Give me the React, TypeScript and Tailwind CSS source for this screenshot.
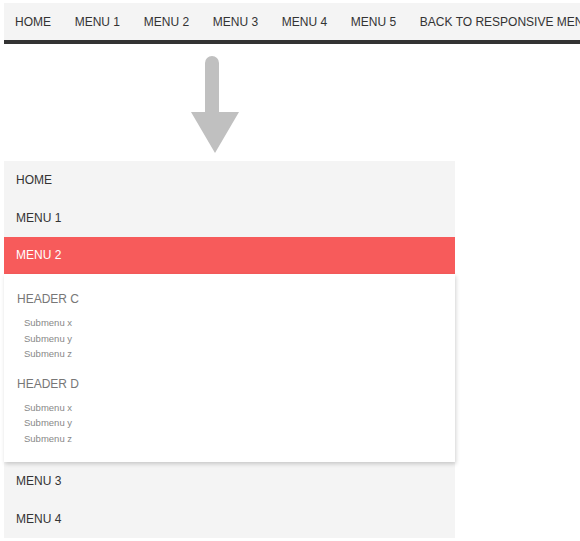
import React from "react";

const navItems = ["HOME", "MENU 1", "MENU 2", "MENU 3", "MENU 4", "MENU 5", "BACK TO RESPONSIVE MENU"];

function Section({ title }: { title: string }) {
  return (
    <div>
      <div className="h-[20px] leading-[20px] text-[12px] text-[#777777] pl-[13px]">{title}</div>
      <ul className="mt-[6px] pl-[20px] text-[9.5px] leading-[15.5px] text-[#888888]">
        <li>Submenu x</li>
        <li>Submenu y</li>
        <li>Submenu z</li>
      </ul>
    </div>
  );
}

export default function App() {
  return (
    <div className="w-[580px] h-[541px] overflow-hidden bg-white pl-[4px] pt-[3px]" style={{ fontFamily: '"Liberation Sans", Arial, sans-serif' }}>
      <nav className="bg-[#f4f4f4] border-b-[4px] border-[#333333] h-[41px] overflow-hidden">
        <ul className="flex whitespace-nowrap h-[37px] items-center text-[12px] text-[#333333]">
          {navItems.map((t) => (
            <li key={t} className="px-[11.85px] first:pl-[11px]">{t}</li>
          ))}
        </ul>
      </nav>
      <div className="h-[117px] flex justify-start">
        <svg width="48" height="98" viewBox="0 0 48 98" className="ml-[187px] mt-[12px]">
          <path d="M14 7 a7 7 0 0 1 14 0 V56 H48 L24 97 L0 56 H14 Z" fill="#c0c0c0" />
        </svg>
      </div>
      <div className="w-[451px] bg-[#f4f4f4] text-[12px] text-[#333333]">
        <div className="h-[38px] leading-[38px] pl-[12px]">HOME</div>
        <div className="h-[38px] leading-[38px] pl-[12px]">MENU 1</div>
        <div className="h-[37px] leading-[37px] pl-[12px] bg-[#f75b5b] text-white">MENU 2</div>
        <div className="relative z-10 bg-white shadow-[1px_2px_4px_rgba(0,0,0,0.18)] pt-[15px] pb-[16px]">
          <Section title="HEADER C" />
          <div className="mt-[12px]">
            <Section title="HEADER D" />
          </div>
        </div>
        <div className="h-[38px] leading-[38px] pl-[12px]">MENU 3</div>
        <div className="h-[38px] leading-[38px] pl-[12px]">MENU 4</div>
      </div>
    </div>
  );
}
